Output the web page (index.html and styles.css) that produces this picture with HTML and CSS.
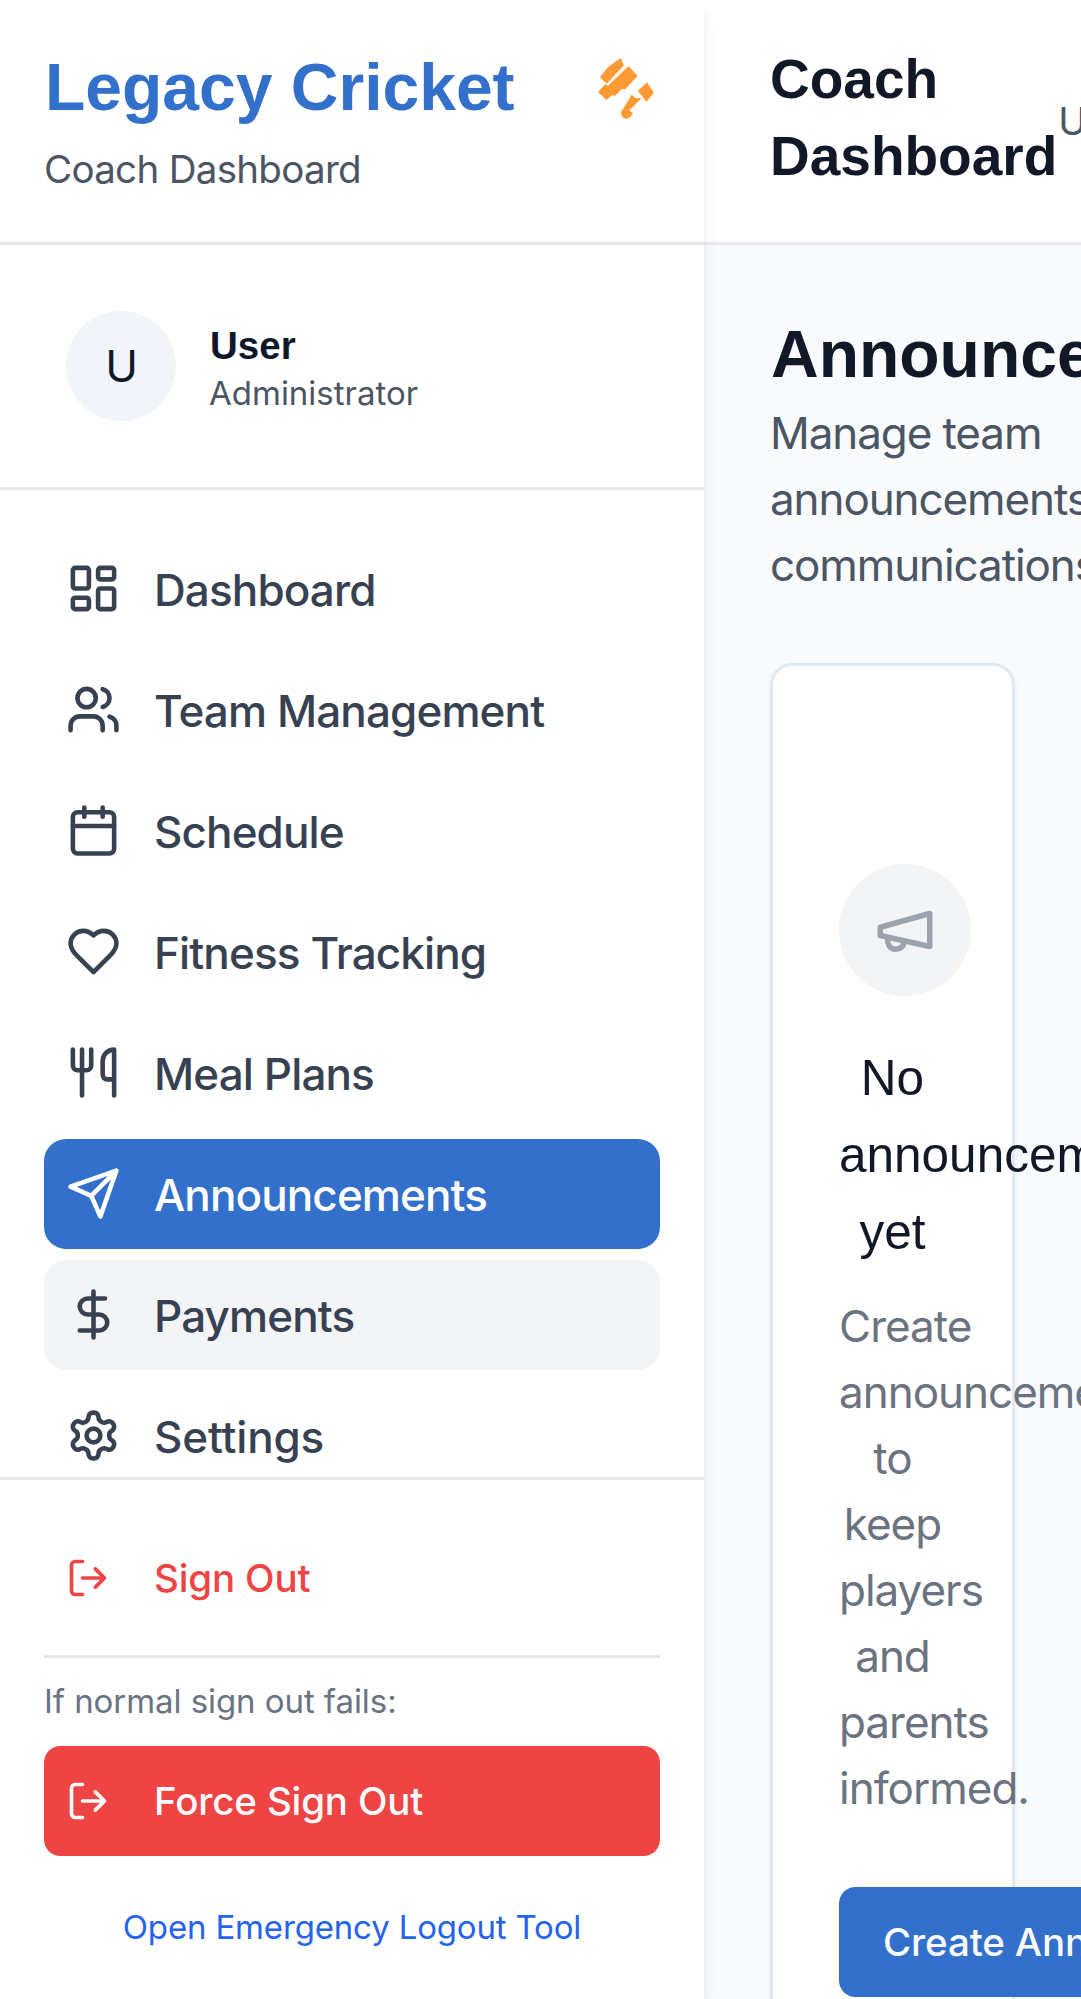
FILE: index.html
```html
<!DOCTYPE html>
<html lang="en">
<head>
<meta charset="utf-8">
<title>Legacy Cricket</title>
<link rel="stylesheet" href="styles.css">
</head>
<body>
<div class="app">
  <aside class="sidebar">
    <div class="brand">
      <div>
        <h1 class="brand-name">Legacy Cricket</h1>
        <p class="brand-sub">Coach Dashboard</p>
      </div>
      <svg class="brand-logo" viewBox="0 0 168 183" fill="currentColor"><path d="M68 0 78 22 26 77 6 58 31 26ZM92 25 119 53 82 94 72 92 51 114 43 111 25 126 0 101 21 79 30 83 75 40ZM147 73 168 104 145 131 120 98ZM101 110 112 120 131 121 94 157 105 166Q96 183 82 182Q67 178 69 162L82 142Z"/><path class="seam" d="M31 26 50 51M50 64 72 92M72 44 92 66M82 142 94 157"/></svg>
    </div>
    <div class="profile">
      <div class="avatar">U</div>
      <div>
        <p class="profile-name">User</p>
        <p class="profile-role">Administrator</p>
      </div>
    </div>
    <nav class="nav">
      <a class="nav-item"><svg class="icon" viewBox="0 0 24 24"><rect x="3" y="3" width="7" height="9" rx="1"/><rect x="14" y="3" width="7" height="5" rx="1"/><rect x="14" y="12" width="7" height="9" rx="1"/><rect x="3" y="16" width="7" height="5" rx="1"/></svg><span>Dashboard</span></a>
      <a class="nav-item"><svg class="icon" viewBox="0 0 24 24"><path d="M16 21v-2a4 4 0 0 0-4-4H6a4 4 0 0 0-4 4v2"/><circle cx="9" cy="7" r="4"/><path d="M22 21v-2a4 4 0 0 0-3-3.87M16 3.13a4 4 0 0 1 0 7.75"/></svg><span>Team Management</span></a>
      <a class="nav-item"><svg class="icon" viewBox="0 0 24 24"><path d="M8 2v4M16 2v4M3 10h18"/><rect x="3" y="4" width="18" height="18" rx="2"/></svg><span>Schedule</span></a>
      <a class="nav-item"><svg class="icon" viewBox="0 0 24 24"><path d="M19 14c1.49-1.46 3-3.21 3-5.5A5.5 5.5 0 0 0 16.5 3c-1.76 0-3 .5-4.5 2-1.5-1.5-2.74-2-4.5-2A5.5 5.5 0 0 0 2 8.5c0 2.3 1.5 4.05 3 5.5l7 7Z"/></svg><span>Fitness Tracking</span></a>
      <a class="nav-item"><svg class="icon" viewBox="0 0 24 24"><path d="M3 2v7c0 1.1.9 2 2 2h4a2 2 0 0 0 2-2V2M7 2v20M21 15V2a5 5 0 0 0-5 5v6c0 1.1.9 2 2 2h3Zm0 0v7"/></svg><span>Meal Plans</span></a>
      <a class="nav-item active"><svg class="icon" viewBox="0 0 24 24"><path d="m22 2-7 20-4-9-9-4ZM22 2 11 13"/></svg><span>Announcements</span></a>
      <a class="nav-item hovered"><svg class="icon" viewBox="0 0 24 24"><path d="M12 2v20M17 5H9.5a3.5 3.5 0 0 0 0 7h5a3.5 3.5 0 0 1 0 7H6"/></svg><span>Payments</span></a>
      <a class="nav-item loose"><svg class="icon" viewBox="0 0 24 24"><path d="M12.22 2h-.44a2 2 0 0 0-2 2v.18a2 2 0 0 1-1 1.73l-.43.25a2 2 0 0 1-2 0l-.15-.08a2 2 0 0 0-2.73.73l-.22.38a2 2 0 0 0 .73 2.73l.15.1a2 2 0 0 1 1 1.72v.51a2 2 0 0 1-1 1.74l-.15.09a2 2 0 0 0-.73 2.73l.22.38a2 2 0 0 0 2.73.73l.15-.08a2 2 0 0 1 2 0l.43.25a2 2 0 0 1 1 1.73V20a2 2 0 0 0 2 2h.44a2 2 0 0 0 2-2v-.18a2 2 0 0 1 1-1.73l.43-.25a2 2 0 0 1 2 0l.15.08a2 2 0 0 0 2.73-.73l.22-.39a2 2 0 0 0-.73-2.73l-.15-.08a2 2 0 0 1-1-1.74v-.5a2 2 0 0 1 1-1.74l.15-.09a2 2 0 0 0 .73-2.73l-.22-.38a2 2 0 0 0-2.73-.73l-.15.08a2 2 0 0 1-2 0l-.43-.25a2 2 0 0 1-1-1.73V4a2 2 0 0 0-2-2z"/><circle cx="12" cy="12" r="3"/></svg><span>Settings</span></a>
    </nav>
    <div class="sidebar-footer">
      <button class="signout"><svg class="icon" viewBox="0 0 24 24"><path d="M9 21H5a2 2 0 0 1-2-2V5a2 2 0 0 1 2-2h4M16 17l5-5-5-5M21 12H9"/></svg><span>Sign Out</span></button>
      <div class="fallback">
        <p class="fallback-note">If normal sign out fails:</p>
        <button class="signout force"><svg class="icon" viewBox="0 0 24 24"><path d="M9 21H5a2 2 0 0 1-2-2V5a2 2 0 0 1 2-2h4M16 17l5-5-5-5M21 12H9"/></svg><span>Force Sign Out</span></button>
        <a class="emergency">Open Emergency Logout Tool</a>
      </div>
    </div>
  </aside>
  <div class="page">
    <header class="topbar">
      <h1 class="topbar-title">Coach Dashboard</h1>
      <span class="topbar-user">User</span>
    </header>
    <main class="content">
      <h2 class="heading">Announcements</h2>
      <p class="lead">Manage team announcements and communications</p>
      <section class="card">
        <div class="badge"><svg class="icon" viewBox="0 0 24 24"><path d="m3 11 18-5v12L3 14v-3z"/><path d="M11.6 16.8a3 3 0 1 1-5.8-1.6"/></svg></div>
        <h3 class="card-title">No announcements yet</h3>
        <p class="card-text">Create announcements to keep players and parents informed.</p>
        <button class="create">Create Announcement</button>
      </section>
    </main>
  </div>
</div>
</body>
</html>
```
FILE: styles.css
```css
/* 1rem is one 16-unit step of the mobile design, at its 2.75 display scale */
html { font-size: 44px; }
* { box-sizing: border-box; margin: 0; padding: 0; }
body {
  height: 100vh;
  overflow: hidden;
  font-family: Inter, "Liberation Sans", sans-serif;
  line-height: 1.5rem;
  color: #0f172a;
  background: #f8fafc;
}
h1, h2, h3 { font-family: "Liberation Sans", Arial, sans-serif; color: #111827; }
button { border: 0; background: none; font: inherit; text-align: left; }
.app { display: flex; height: 100vh; }
.icon {
  flex: none;
  width: 1.25rem;
  height: 1.25rem;
  fill: none;
  stroke: currentColor;
  stroke-width: 2;
  stroke-linecap: round;
  stroke-linejoin: round;
}

.sidebar {
  position: relative;
  z-index: 1;
  display: flex;
  flex: none;
  flex-direction: column;
  width: 16rem;
  height: 100%;
  background: #fff;
  box-shadow: 0 .25rem .375rem -.0625rem rgb(0 0 0 / .1), 0 .125rem .25rem -.125rem rgb(0 0 0 / .1);
}
.brand {
  display: flex;
  flex: none;
  justify-content: space-between;
  height: 5.5625rem;
  padding: 1rem;
  border-bottom: 3px solid #e5e7eb;
}
.brand-name { margin: -1px 0 1px 1px; font-size: 1.5rem; line-height: 2rem; color: #3370cb; }
.brand-sub { margin-top: .25rem; font-size: .875rem; line-height: 1.25rem; letter-spacing: -.018em; color: #4b5563; }
.brand-logo { width: 56px; height: 61px; margin: 14px 6px 0 0; color: #ff9933; }
.seam { fill: none; stroke: #ffb56b; stroke-width: 1; }
.profile {
  display: flex;
  flex: none;
  align-items: center;
  gap: .75rem;
  height: 5.5625rem;
  padding: 0 1.5rem;
  border-bottom: 3px solid #e5e7eb;
}
.avatar {
  display: flex;
  align-items: center;
  justify-content: center;
  width: 2.5rem;
  height: 2.5rem;
  padding: 1px 0 0 1px;
  border-radius: 50%;
  background: #f1f5f9;
}
.profile-name { margin: 1px 0 -2px 1px; font: bold .875rem/1.25rem "Liberation Sans", Arial, sans-serif; }
.profile-role { font-size: .75rem; line-height: 1rem; color: #4b5563; }

.nav {
  display: flex;
  flex: 1;
  flex-direction: column;
  gap: .25rem;
  min-height: 0;
  padding: 1rem 1rem 0;
  overflow: hidden;
}
.nav-item {
  display: flex;
  flex: none;
  align-items: center;
  gap: .75rem;
  height: 2.5rem;
  padding: 0 .5rem;
  border-radius: .5rem;
  font-weight: 500;
  letter-spacing: -.02em;
  color: #374151;
}
.nav-item span { padding-top: 2px; }
.active { color: #fff; background: #3370cb; }
.hovered { background: #f3f4f6; }
.loose { letter-spacing: -.004em; }

.sidebar-footer {
  flex: none;
  padding: 43px 1rem .5rem;
  border-top: 3px solid #e5e7eb;
}
.signout {
  display: flex;
  align-items: center;
  gap: 1rem;
  width: 100%;
  height: 2.5rem;
  padding: 0 .5rem;
  border-radius: .375rem;
  font-size: .875rem;
  font-weight: 500;
  letter-spacing: -.004em;
  color: #ef4444;
}
.signout .icon { width: 1rem; height: 1rem; }
.force { color: #f8fafc; background: #ef4444; }
.fallback { margin-top: .5rem; padding-top: 21px; border-top: 3px solid #e5e7eb; }
.fallback-note { margin-bottom: 23px; font-size: .75rem; line-height: 1rem; letter-spacing: -.002em; color: #6b7280; }
.emergency {
  display: flex;
  align-items: center;
  justify-content: center;
  height: 2.25rem;
  margin-top: .5rem;
  padding-bottom: 2px;
  font-size: .75rem;
  letter-spacing: -.005em;
  color: #2563eb;
}

.page { flex: 1; min-width: 0; overflow: hidden; }
.topbar {
  display: flex;
  align-items: center;
  justify-content: space-between;
  height: 5.5625rem;
  padding: 0 1.5rem;
  border-bottom: 3px solid #e5e7eb;
  background: #fff;
}
.topbar-title { padding-bottom: 5px; font-size: 1.25rem; line-height: 1.75rem; }
.topbar-user { padding: 2px 0 0 1px; font-size: .875rem; line-height: 1.25rem; color: #4b5563; }
.content { padding: 1.5rem; }
.heading { margin: -1px 0 2px 1px; font-size: 1.5rem; line-height: 2rem; white-space: nowrap; }
.lead { width: 11rem; margin-bottom: -1px; letter-spacing: -.025em; color: #4b5563; }
.card {
  margin-top: 1.5rem;
  padding: 4.5rem 1.5rem;
  border: 3px solid #e2e8f0;
  border-radius: .5rem;
  background: #fff;
  box-shadow: 0 .0625rem .125rem rgb(0 0 0 / .05);
  text-align: center;
}
.lead + .card { margin-top: 66px; }
.badge {
  display: flex;
  align-items: center;
  justify-content: center;
  width: 3rem;
  height: 3rem;
  margin-bottom: 43px;
  border-radius: 50%;
  color: #9ca3af;
  background: #f3f4f6;
}
.badge .icon { width: 1.5rem; height: 1.5rem; }
.card-title { font-size: 1.125rem; font-weight: 400; line-height: 1.75rem; }
.card-text { margin-top: 23px; letter-spacing: -.023em; color: #6b7280; }
.create {
  display: block;
  height: 2.5rem;
  margin-top: 1.5rem;
  padding: 0 1rem;
  border-radius: .375rem;
  font-size: .875rem;
  font-weight: 500;
  letter-spacing: -.004em;
  white-space: nowrap;
  color: #f8fafc;
  background: #3370cb;
}
```
